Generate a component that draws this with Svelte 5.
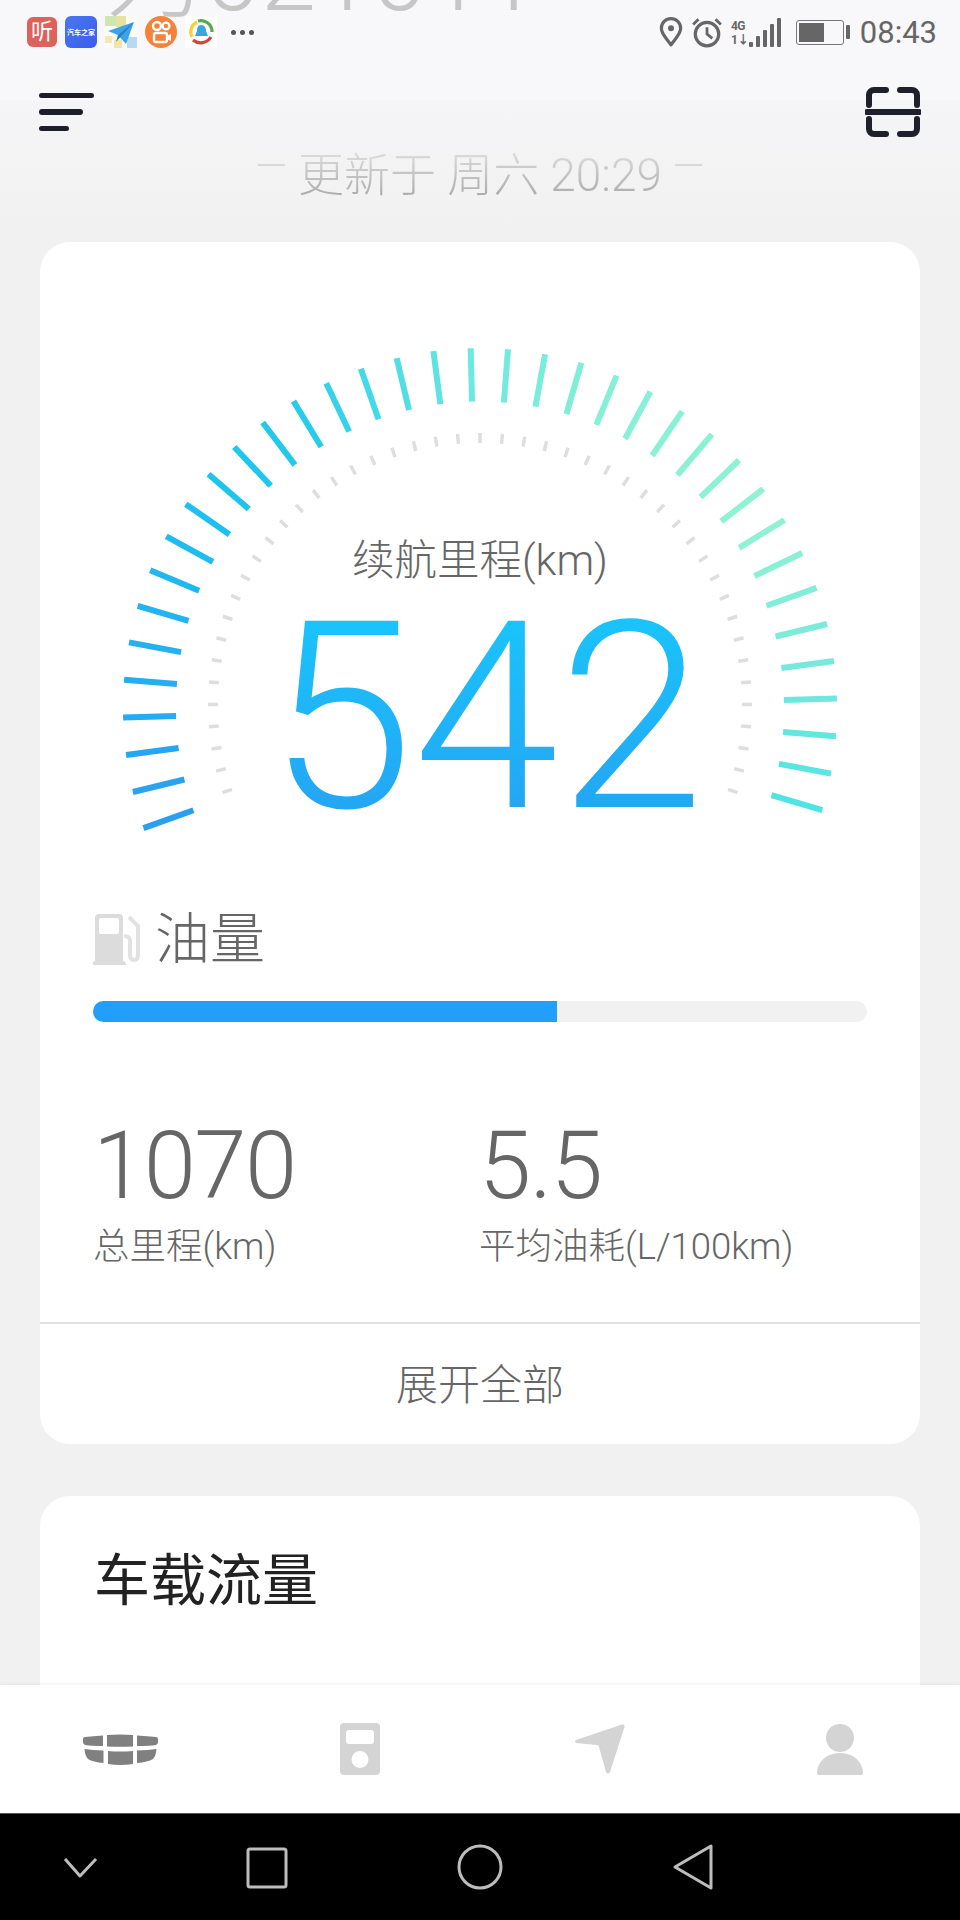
<script lang="ts">
	const CX = 440
	const CY = 466
	const INNER_CY = 463

	const outerStops = [
		[0, [42, 159, 240]],
		[6, [34, 180, 240]],
		[10, [28, 196, 238]],
		[13, [40, 204, 232]],
		[15, [69, 216, 230]],
		[18, [108, 233, 224]],
		[22, [133, 240, 214]],
		[28, [144, 242, 212]],
		[32, [117, 233, 220]],
		[36, [79, 227, 227]],
	] as const

	function tickColor(i: number) {
		let n = 0
		while (n < outerStops.length - 2 && outerStops[n + 1][0] <= i) n++
		const [a, ca] = outerStops[n]
		const [b, cb] = outerStops[n + 1]
		const t = (i - a) / (b - a)
		return `rgb(${ca.map((v, c) => Math.round(v + (cb[c] - v) * t)).join(',')})`
	}

	function polar(deg: number, r: number, cy: number, stretch = 1) {
		const rad = (deg * Math.PI) / 180
		return { x: CX + Math.sin(rad) * r, y: cy - Math.cos(rad) * r * stretch }
	}

	const outerTicks = Array.from({ length: 37 }, (_, i) => {
		const deg = -1.5 + 6 * (i - 18)
		const p1 = polar(deg, 357, CY, 1.008)
		const p2 = polar(deg, 304, CY, 1.008)
		return { p1, p2, color: tickColor(i) }
	})

	const innerTicks = Array.from({ length: 47 }, (_, i) => {
		const deg = 4.73 * (i - 23)
		return { p1: polar(deg, 272, INNER_CY), p2: polar(deg, 262, INNER_CY) }
	})
</script>

<div class="screen">
	<div class="page">
		<div class="ghost-title">为 021011</div>
		<div class="status-bar">
			<div class="app-icons">
				<span class="app ting">听</span>
				<span class="app autohome">汽车之家</span>
				<svg class="app-svg" viewBox="0 0 32 32">
					<rect width="32" height="32" fill="#fbfbf6" />
					<rect x="0" y="0" width="11" height="10" fill="#cfe6b4" />
					<rect x="11" y="0" width="10" height="11" fill="#e8e2a0" />
					<rect x="22" y="21" width="10" height="11" fill="#b9d8f2" />
					<rect x="9" y="24" width="8" height="8" fill="#f2e3a8" />
					<rect x="0" y="20" width="7" height="7" fill="#f5e8b8" />
					<path d="M3 15 L29 6 L21 28 L13 19 Z" fill="#3aa4ea" />
					<path d="M13 19 L29 6 L11 26 Z" fill="#2a7fc0" />
				</svg>
				<svg class="app-svg" viewBox="0 0 32 32">
					<circle cx="16" cy="16" r="16" fill="#f5823a" />
					<circle cx="12" cy="10" r="4" fill="none" stroke="#fff" stroke-width="2.4" />
					<circle cx="21" cy="10" r="3.4" fill="none" stroke="#fff" stroke-width="2.4" />
					<rect x="9" y="17" width="13" height="9" rx="2" fill="none" stroke="#fff" stroke-width="2.4" />
					<path d="M22 20 L26 18 V25 L22 23 Z" fill="#fff" />
				</svg>
				<svg class="app-svg" viewBox="0 0 32 32">
					<rect width="32" height="32" fill="#fdfdfc" />
					<path d="M7 21 A11 11 0 0 1 12 6" fill="none" stroke="#f2d33c" stroke-width="3.2" />
					<path d="M13 5 A11 11 0 0 1 27 16" fill="none" stroke="#58a850" stroke-width="3.2" />
					<path d="M26 21 A12 12 0 0 1 8 24" fill="none" stroke="#d8443c" stroke-width="3.2" />
					<path d="M16 9 C20 9 21 12 21 15 L23 20 H10 L12 15 C12 12 13 9 16 9 Z" fill="#3aa6e0" />
				</svg>
				<span class="more"><i></i><i></i><i></i></span>
			</div>
			<div class="sys-icons">
				<svg class="pin" viewBox="0 0 22 28">
					<path d="M11 26 C7 20 2 16 2 10.5 A9 9 0 0 1 20 10.5 C20 16 15 20 11 26 Z" fill="none" stroke="#666" stroke-width="3" stroke-linejoin="round" />
					<circle cx="11" cy="10.5" r="2.8" fill="#666" />
				</svg>
				<svg class="alarm" viewBox="0 0 30 29">
					<circle cx="15" cy="16" r="11" fill="none" stroke="#666" stroke-width="3" />
					<path d="M15 9.5 V16 L20 20" fill="none" stroke="#666" stroke-width="2.6" />
					<path d="M2 7 L7 2 M23 2 L28 7" stroke="#666" stroke-width="2.6" />
				</svg>
				<div class="signal">
					<div class="net"><span>4G</span><span>1↓</span></div>
					<div class="bars">
						<i style="height: 5px"></i><i style="height: 11px"></i><i style="height: 17px"></i><i style="height: 23px"></i><i style="height: 29px"></i>
					</div>
				</div>
				<div class="battery"><div class="battery-body"><div class="battery-fill"></div></div><div class="battery-cap"></div></div>
				<span class="clock">08:43</span>
			</div>
		</div>

		<header class="topbar">
			<div class="menu"><i style="width: 55px"></i><i style="width: 44px"></i><i style="width: 30px"></i></div>
			<svg class="scan" viewBox="0 0 56 50">
				<path d="M21 3 H9 A5 5 0 0 0 4 8 V18 M35 3 H47 A5 5 0 0 1 52 8 V18 M4 32 V42 A5 5 0 0 0 9 47 H21 M52 32 V42 A5 5 0 0 1 47 47 H35" fill="none" stroke="#20202c" stroke-width="6" stroke-linecap="round" />
				<path d="M2 25 H54" stroke="#20202c" stroke-width="6" stroke-linecap="round" />
			</svg>
		</header>

		<div class="updated">
			<i class="dash"></i>
			<span>更新于 周六 20:29</span>
			<i class="dash"></i>
		</div>

		<section class="card main-card">
			<div class="gauge">
				<svg class="ticks" viewBox="0 0 880 640" width="880" height="640">
					{#each innerTicks as t}
						<line x1={t.p1.x} y1={t.p1.y} x2={t.p2.x} y2={t.p2.y} stroke="#dedede" stroke-width="3.5" />
					{/each}
					{#each outerTicks as t}
						<line x1={t.p1.x} y1={t.p1.y} x2={t.p2.x} y2={t.p2.y} stroke={t.color} stroke-width="6" />
					{/each}
				</svg>
				<div class="range-label">续航里程(km)</div>
				<div class="range-value">542</div>
			</div>

			<div class="fuel">
				<div class="fuel-title">
					<svg class="pump" viewBox="0 0 48 51">
						<path d="M0 51 V49 Q0 47 2 47 V4 Q2 0 6 0 H26 Q30 0 30 4 V47 Q33 47 33 51 Z M8 4 Q6 4 6 6 V18 Q6 20 8 20 H24 Q26 20 26 18 V6 Q26 4 24 4 Z" fill="#dcdcdc" fill-rule="evenodd" />
						<path d="M36 3 L45 12 V41 Q45 46 41 46 Q37 46 37 41 V27 Q37 22 31 22" fill="none" stroke="#e2e2e2" stroke-width="4" />
					</svg>
					<span>油量</span>
				</div>
				<div class="fuel-track"><div class="fuel-fill" style="width: 60%"></div></div>
			</div>

			<div class="stats">
				<div class="stat">
					<div class="stat-value">1070</div>
					<div class="stat-label">总里程(km)</div>
				</div>
				<div class="stat">
					<div class="stat-value">5.5</div>
					<div class="stat-label">平均油耗(L/100km)</div>
				</div>
			</div>

			<div class="expand">展开全部</div>
		</section>

		<section class="card flow-card">
			<h2>车载流量</h2>
		</section>
	</div>

	<nav class="tabbar">
		<svg class="tab-geely" viewBox="0 0 75 31">
			<path d="M2 3 Q10 2 20 1.5 V12 Q8 12 2 11 Q0 10 0 8 V5 Q0 3 2 3 Z" />
			<path d="M24 1 Q37 0 50 1 V12.5 Q37 13 24 12.5 Z" />
			<path d="M54 1.5 Q65 2 73 3 Q75 3 75 5 V8 Q75 10 73 11 Q67 12 54 12 Z" />
			<path d="M1.5 15 Q10 16 20.5 16.5 V29 Q10 28 5 25 Q2 22 1.5 15 Z" />
			<path d="M25 17 Q37 18 50 17 V30 Q37 32 25 30 Z" />
			<path d="M54 16.5 Q65 16 73.5 15 Q73 22 70 25 Q65 28 54 29 Z" />
		</svg>
		<svg class="tab-icon tab-device" viewBox="0 0 40 52">
			<path fill-rule="evenodd" d="M4 0 H36 Q40 0 40 4 V48 Q40 52 36 52 H4 Q0 52 0 48 V4 Q0 0 4 0 Z M9 7 Q6 7 6 10 V18 Q6 21 9 21 H31 Q34 21 34 18 V10 Q34 7 31 7 Z M20 28 A8.5 8.5 0 1 0 20 45 A8.5 8.5 0 1 0 20 28 Z" />
		</svg>
		<svg class="tab-icon tab-arrow" viewBox="0 0 50 50">
			<path d="M1 16 L47 0.5 Q50 0 49.5 3 L35 48 Q33 51 31 48 L24 23 Q24 21 22 21 L1 19 Q-1 17 1 16 Z" />
		</svg>
		<svg class="tab-icon tab-user" viewBox="0 0 46 51">
			<circle cx="23" cy="14" r="14" />
			<path d="M2 51 Q0 51 0 48 C1 37 10 29 23 29 C36 29 45 37 46 48 Q46 51 44 51 Z" />
		</svg>
	</nav>

	<div class="sysnav">
		<svg viewBox="0 0 960 107" width="960" height="107" fill="none" stroke="#bdbdbd" stroke-width="3">
			<path d="M65 45 L80 62 L96 45" stroke-linejoin="round" />
			<rect x="248" y="35" width="38" height="38" rx="2" />
			<circle cx="480" cy="53" r="21" />
			<path d="M711 32 V74 L675 53 Z" stroke-linejoin="round" />
		</svg>
	</div>
</div>

<style>
	:global(body) {
		margin: 0;
		background: #f1f1f1;
	}

	.screen {
		width: 960px;
		height: 1920px;
		display: flex;
		flex-direction: column;
		overflow: hidden;
		font-family: Roboto, 'Noto Sans CJK SC', sans-serif;
		color: #666;
	}

	.page {
		position: relative;
		height: 1685px;
		flex: none;
		overflow: hidden;
		background: linear-gradient(#f8f8fb 0, #f8f8fb 100px, #f5f5f7 101px, #f1f1f1 240px);
	}

	.ghost-title {
		position: absolute;
		left: 105px;
		top: -62px;
		font-size: 100px;
		line-height: 76px;
		font-weight: 300;
		word-spacing: -24px;
		color: #c6c6c6;
		white-space: nowrap;
	}

	.status-bar {
		position: relative;
		height: 64px;
		display: flex;
		justify-content: space-between;
		align-items: center;
		padding: 0 23px 0 27px;
	}

	.app-icons,
	.sys-icons {
		display: flex;
		align-items: center;
	}

	.app-icons {
		gap: 8px;
	}

	.app,
	.app-svg {
		width: 32px;
		height: 32px;
		flex: none;
	}

	.app {
		display: flex;
		align-items: center;
		justify-content: center;
		color: #fff;
		text-align: center;
		overflow: hidden;
	}

	.ting {
		width: 30px;
		height: 30px;
		border-radius: 6px;
		background: #de625c;
		font-size: 22px;
		line-height: 30px;
	}

	.autohome {
		border-radius: 6px;
		background: linear-gradient(135deg, #4a78f0, #3a5cf0);
		font-size: 7px;
		font-weight: 700;
		white-space: nowrap;
	}

	.more {
		display: flex;
		gap: 4px;
		margin-left: 6px;
	}

	.more i {
		width: 5px;
		height: 5px;
		border-radius: 50%;
		background: #555;
	}

	.pin {
		width: 24px;
		height: 30px;
	}

	.alarm {
		width: 32px;
		height: 31px;
		margin-left: 8px;
	}

	.signal {
		display: flex;
		align-items: flex-end;
		margin-left: 8px;
		height: 29px;
	}

	.net {
		display: flex;
		flex-direction: column;
		font-size: 12px;
		line-height: 14px;
		font-weight: 700;
		letter-spacing: -0.5px;
	}

	.bars {
		display: flex;
		align-items: flex-end;
		gap: 3px;
	}

	.bars i {
		width: 4px;
		background: #666;
		border-radius: 1px;
	}

	.battery {
		display: flex;
		align-items: center;
		gap: 2px;
		margin-left: 15px;
	}

	.battery-body {
		width: 48px;
		height: 25px;
		box-sizing: border-box;
		border: 1.5px solid #777;
		border-radius: 3px;
		padding: 2px;
	}

	.battery-fill {
		width: 25px;
		height: 100%;
		background: #666;
	}

	.battery-cap {
		width: 4px;
		height: 14px;
		background: #666;
		border-radius: 1px;
	}

	.clock {
		font-size: 31px;
		margin-left: 10px;
		color: #666;
	}

	.topbar {
		position: relative;
		display: flex;
		justify-content: space-between;
		align-items: center;
		height: 76px;
		margin-top: 10px;
		padding: 0 39px;
	}

	.menu {
		display: flex;
		flex-direction: column;
		gap: 11px;
	}

	.menu i {
		display: block;
		height: 5.5px;
		border-radius: 3px;
		background: #1e1e2a;
	}

	.scan {
		width: 56px;
		height: 50px;
	}

	.updated {
		display: flex;
		justify-content: center;
		align-items: center;
		gap: 13px;
		height: 48px;
		margin-top: 1px;
		font-size: 46px;
		font-weight: 300;
		line-height: 48px;
		color: #b4b4b4;
		white-space: nowrap;
	}

	.updated span {
		background: linear-gradient(#dedede, #a8a8a8);
		background-clip: text;
		-webkit-background-clip: text;
		color: transparent;
	}

	.dash {
		width: 27px;
		height: 2px;
		margin-top: -20px;
		background: #d8d8d8;
	}

	.card {
		background: #fff;
		border-radius: 30px;
		margin: 0 40px;
	}

	.main-card {
		height: 1202px;
		margin-top: 43px;
		display: flex;
		flex-direction: column;
	}

	.gauge {
		position: relative;
		height: 640px;
		box-sizing: border-box;
		padding-top: 294px;
		text-align: center;
	}

	.ticks {
		position: absolute;
		left: 0;
		top: 0;
	}

	.range-label {
		position: relative;
		font-size: 42.5px;
		line-height: 50px;
		font-weight: 300;
	}

	.range-value {
		position: relative;
		font-size: 262px;
		line-height: 260px;
		font-weight: 300;
		margin-top: 2px;
		padding-left: 12px;
		background: linear-gradient(#1ac4fb 10%, #24a6f4 85%);
		background-clip: text;
		-webkit-background-clip: text;
		color: transparent;
	}

	.fuel {
		padding: 0 53px;
	}

	.fuel-title {
		display: flex;
		align-items: center;
		gap: 14px;
		height: 60px;
		margin-top: 27px;
		font-size: 55px;
		line-height: 60px;
		font-weight: 300;
	}

	.pump {
		width: 48px;
		height: 51px;
	}

	.fuel-track {
		height: 21px;
		margin-top: 32px;
		border-radius: 11px;
		background: #f1f1f1;
		overflow: hidden;
	}

	.fuel-fill {
		height: 100%;
		background: #229ffb;
	}

	.stats {
		display: flex;
		padding: 0 53px;
		margin-top: 97px;
		flex: 1;
	}

	.stat {
		width: 386px;
	}

	.stat-value {
		font-size: 94px;
		line-height: 94px;
		font-weight: 300;
		letter-spacing: -1.5px;
	}

	.stat-label {
		font-size: 36.5px;
		line-height: 44px;
		font-weight: 300;
		margin-top: 12px;
	}

	.expand {
		height: 120px;
		border-top: 2px solid #e2e2e2;
		font-size: 42px;
		line-height: 124px;
		font-weight: 300;
		text-align: center;
	}

	.flow-card {
		height: 300px;
		margin-top: 52px;
	}

	.flow-card h2 {
		margin: 0;
		padding: 50px 0 0 54px;
		font-size: 56px;
		line-height: 70px;
		font-weight: 400;
		color: #222;
	}

	.tabbar {
		position: relative;
		height: 128px;
		flex: none;
		background: #fff;
		box-shadow: 0 -2px 3px rgba(0, 0, 0, 0.04);
		display: grid;
		grid-template-columns: 240px 240px 240px 240px;
		justify-items: center;
		align-items: center;
	}

	.tab-geely {
		width: 75px;
		height: 31px;
		fill: #808080;
	}

	.tab-icon {
		fill: #d4d4d4;
	}

	.tab-device {
		width: 40px;
		height: 52px;
	}

	.tab-arrow {
		width: 50px;
		height: 50px;
	}

	.tab-user {
		width: 46px;
		height: 51px;
	}

	.sysnav {
		flex: 1;
		background: #000;
		border-top: 1px solid #555;
		overflow: hidden;
	}

	.sysnav svg {
		display: block;
	}
</style>
